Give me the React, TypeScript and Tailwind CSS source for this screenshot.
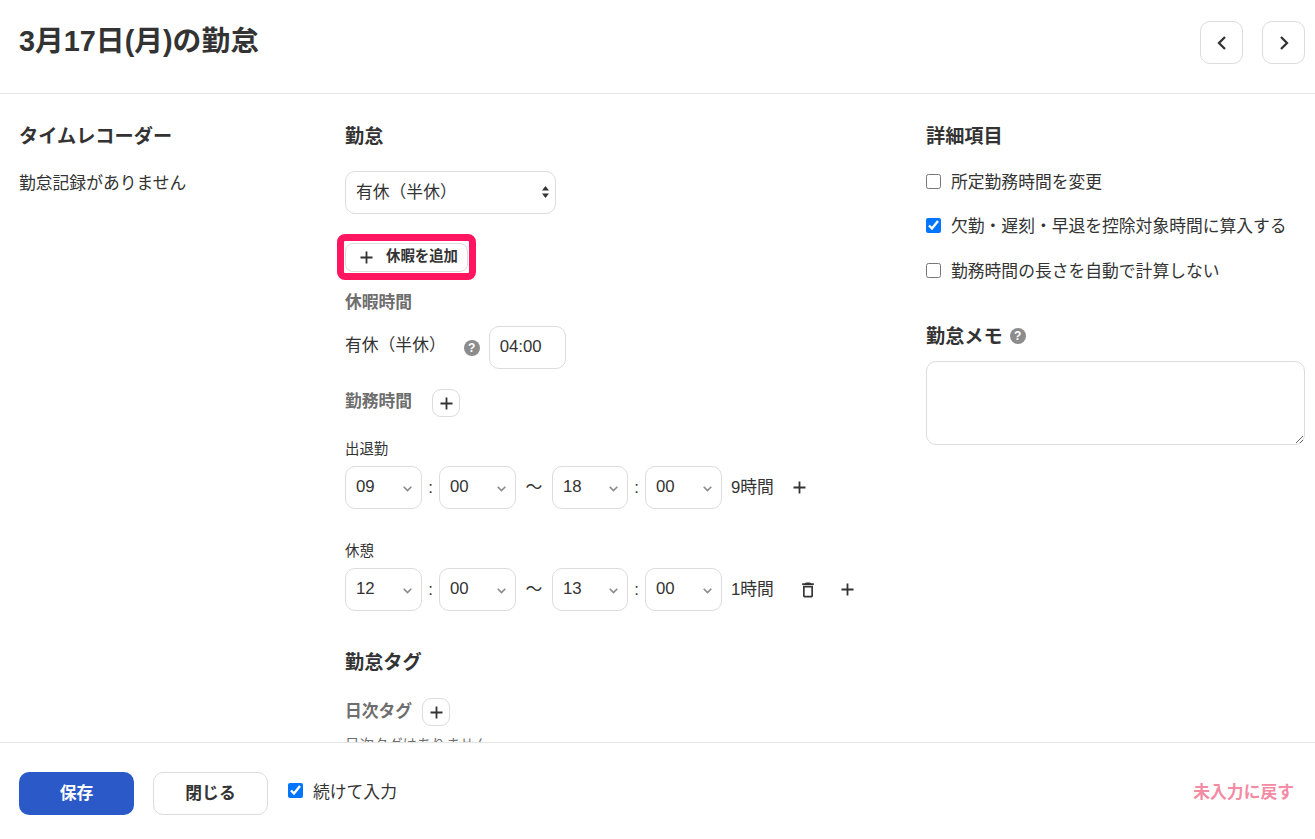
import { MdDeleteOutline } from "react-icons/md";

function PlusIcon({ size = 13 }: { size?: number }) {
  return (
    <svg width={size} height={size} viewBox="0 0 13 13" fill="none" stroke="currentColor" strokeWidth="1.8">
      <path d="M6.5 0.5v12M0.5 6.5h12" />
    </svg>
  );
}

function HelpIcon() {
  return (
    <span className="flex size-4 flex-none items-center justify-center rounded-full bg-[#8c8c8c] text-[12px] font-bold leading-none text-white">
      ?
    </span>
  );
}

function SmallAdd() {
  return (
    <button
      type="button"
      className="flex size-[28px] flex-none items-center justify-center rounded-[9px] border border-[#dcdcdc] bg-white text-[#333]"
    >
      <PlusIcon />
    </button>
  );
}

function TimeSelect({ value, width = "w-[77px]" }: { value: string; width?: string }) {
  return (
    <div className={`relative h-[43px] flex-none ${width}`}>
      <select
        defaultValue={value}
        className="h-full w-full appearance-none rounded-[10px] border border-[#dcdcdc] bg-white pb-[2px] pl-[10px] text-[16.8px] text-[#333] outline-none"
      >
        <option value={value}>{value}</option>
      </select>
      <svg
        className="pointer-events-none absolute right-[10px] top-[20px]"
        width="9"
        height="6"
        viewBox="0 0 9 6"
        fill="none"
        stroke="#8a8a8a"
        strokeWidth="1.6"
      >
        <path d="M0.7 0.8 4.5 4.6 8.3 0.8" />
      </svg>
    </div>
  );
}

function TimeRow({ from, to, total, children }: { from: string[]; to: string[]; total: string; children: React.ReactNode }) {
  return (
    <div className="flex h-[43px] items-center text-[16.8px] text-[#333]">
      <TimeSelect value={from[0]} />
      <span className="w-[17px] text-center">:</span>
      <TimeSelect value={from[1]} />
      <span className="w-[36px] text-center">〜</span>
      <TimeSelect value={to[0]} width="w-[76px]" />
      <span className="w-[17px] text-center">:</span>
      <TimeSelect value={to[1]} />
      <span className="ml-[9px]">{total}</span>
      {children}
    </div>
  );
}

function CheckRow({ label, checked, className }: { label: string; checked?: boolean; className: string }) {
  return (
    <label className={`flex h-[24px] items-center text-[16.8px] text-[#333] ${className}`}>
      <input type="checkbox" defaultChecked={checked} className="m-0 mb-[2px] size-[15px] flex-none" />
      <span className="ml-[10px] pt-[2px]">{label}</span>
    </label>
  );
}

function NavButton({ d }: { d: string }) {
  return (
    <button type="button" className="flex size-[43px] items-center justify-center rounded-[10px] border border-[#dcdcdc] bg-white text-[#333]">
      <svg width="10" height="14" viewBox="0 0 10 14" fill="none" stroke="currentColor" strokeWidth="2.3">
        <path d={d} />
      </svg>
    </button>
  );
}

export default function App() {
  return (
    <div className="flex h-[839px] flex-col overflow-hidden bg-white font-['Liberation_Sans','Noto_Sans_CJK_JP',sans-serif] text-[#333]">
      <header className="flex h-[94px] flex-none justify-between border-b border-[#e5e5e5] pl-[19px] pr-[10px]">
        <h1 className="mt-[21px] text-[28.8px] font-bold leading-[40px]">3月17日(月)の勤怠</h1>
        <div className="mt-[21px] flex gap-[19px]">
          <NavButton d="M8 1 2 7l6 6" />
          <NavButton d="M2 1l6 6-6 6" />
        </div>
      </header>

      <main className="flex min-h-0 flex-1 overflow-hidden pl-[19px] pr-[10px] pt-[28px]">
        <section className="w-[326px] flex-none">
          <h2 className="h-[28px] text-[19.2px] font-bold leading-[30px]">タイムレコーダー</h2>
          <p className="mt-[20px] h-[24px] text-[16.8px] leading-[27px]">勤怠記録がありません</p>
        </section>

        <section className="w-[581px] flex-none">
          <h2 className="h-[28px] text-[19.2px] font-bold leading-[30px]">勤怠</h2>

          <div className="relative mt-[21px] h-[43px] w-[211px]">
            <select className="h-full w-full appearance-none rounded-[10px] border border-[#dcdcdc] bg-white pl-[10px] text-[16.8px] text-[#333] outline-none">
              <option>有休（半休）</option>
            </select>
            <svg className="pointer-events-none absolute right-[7px] top-[15px]" width="7" height="12" viewBox="0 0 7 12" fill="#333">
              <path d="M3.5 0 7 4.6H0zM3.5 12 0 7.4h7z" />
            </svg>
          </div>

          <div className="-ml-[8px] mt-[20px] h-[46px] w-[139px] rounded-[8px] border-[7px] border-[#ff1560] pl-px pt-[2px]">
            <button
              type="button"
              className="flex h-[29px] w-[123px] items-center rounded-[8px] border border-[#dcdcdc] bg-white pl-[14px] text-[#333]"
            >
              <PlusIcon />
              <span className="mb-[2px] ml-[13px] text-[14.4px] font-bold leading-none">休暇を追加</span>
            </button>
          </div>

          <h3 className="mt-[10px] h-[24px] text-[16.8px] font-bold leading-[26px] text-[#6e6e6e]">休暇時間</h3>
          <div className="mt-[12px] flex h-[43px] items-center">
            <span className="mb-[3px] text-[16.8px]">有休（半休）</span>
            <span className="ml-[18px]">
              <HelpIcon />
            </span>
            <input
              defaultValue="04:00"
              className="ml-[9px] h-[43px] w-[77px] rounded-[10px] border border-[#dcdcdc] bg-white pb-[2px] pl-[10px] text-[16.8px] text-[#333] outline-none"
            />
          </div>

          <div className="mt-[20px] flex h-[28px] items-center gap-[20px]">
            <h3 className="mb-[2px] text-[16.8px] font-bold text-[#6e6e6e]">勤務時間</h3>
            <SmallAdd />
          </div>

          <div className="mt-[22px] text-[14.4px] leading-[20px]">出退勤</div>
          <div className="mt-[7px]">
            <TimeRow from={["09", "00"]} to={["18", "00"]} total="9時間">
              <span className="ml-[19px] text-[#333]">
                <PlusIcon />
              </span>
            </TimeRow>
          </div>

          <div className="mt-[32px] text-[14.4px] leading-[20px]">休憩</div>
          <div className="mt-[7px]">
            <TimeRow from={["12", "00"]} to={["13", "00"]} total="1時間">
              <MdDeleteOutline size={20} className="ml-[24px] text-[#333]" />
              <span className="ml-[23px] text-[#333]">
                <PlusIcon />
              </span>
            </TimeRow>
          </div>

          <h2 className="mt-[37px] h-[28px] text-[19.2px] font-bold leading-[30px]">勤怠タグ</h2>
          <div className="mt-[22px] flex h-[28px] items-center gap-[10px]">
            <h3 className="text-[16.8px] font-bold text-[#6e6e6e]">日次タグ</h3>
            <SmallAdd />
          </div>
          <div className="mt-[9px] text-[14.4px] leading-[20px] text-[#6e6e6e]">日次タグはありません</div>
        </section>

        <section className="min-w-0 flex-1">
          <h2 className="h-[28px] text-[19.2px] font-bold leading-[30px]">詳細項目</h2>
          <CheckRow label="所定勤務時間を変更" className="mt-[20px]" />
          <CheckRow label="欠勤・遅刻・早退を控除対象時間に算入する" checked className="mt-[20px]" />
          <CheckRow label="勤務時間の長さを自動で計算しない" className="mt-[21px]" />
          <div className="mt-[39px] flex h-[28px] items-center gap-[7px]">
            <h2 className="pt-[2px] text-[19.2px] font-bold">勤怠メモ</h2>
            <HelpIcon />
          </div>
          <textarea className="mt-[11px] block h-[84px] w-full rounded-[10px] border border-[#dcdcdc] bg-white outline-none" />
        </section>
      </main>

      <footer className="flex h-[97px] flex-none items-start border-t border-[#e5e5e5] pl-[19px] pr-[21px] pt-[29px]">
        <button type="button" className="h-[43px] w-[115px] rounded-[10px] bg-[#2b5ac8] text-[16.8px] font-bold text-white">
          保存
        </button>
        <button type="button" className="ml-[19px] h-[43px] w-[115px] rounded-[10px] border border-[#dcdcdc] bg-white text-[16.8px] font-bold text-[#333]">
          閉じる
        </button>
        <label className="ml-[20px] flex h-[40px] items-center text-[16.8px]">
          <input type="checkbox" defaultChecked className="m-0 mb-[3px] size-[15px]" />
          <span className="ml-[10px] pt-[2px]">続けて入力</span>
        </label>
        <button type="button" className="ml-auto h-[42px] text-[16.8px] font-bold text-[#f28ba3]">
          未入力に戻す
        </button>
      </footer>
    </div>
  );
}
